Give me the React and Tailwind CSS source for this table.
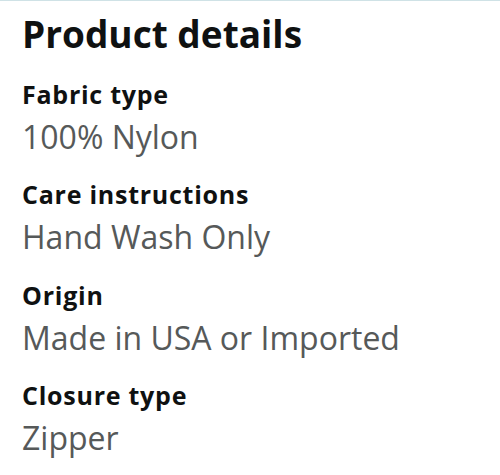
import React from 'react';

const details = [
  { label: 'Fabric type', value: '100% Nylon' },
  { label: 'Care instructions', value: 'Hand Wash Only' },
  { label: 'Origin', value: 'Made in USA or Imported' },
  { label: 'Closure type', value: 'Zipper' },
];

const App = () => {
  return (
    <div className="min-h-screen bg-white border-t border-[#cfe2e6] font-['Open_Sans',sans-serif]">
      <div className="pl-[22px] pt-[9px] flex flex-col gap-[19.5px]">
        <h2 className="mb-[1px] text-[37px] leading-[47px] font-bold text-[#0f1111]">Product details</h2>
        {details.map((d) => (
          <div key={d.label} className="flex flex-col">
            <div className="text-[25px] leading-[32px] font-bold tracking-[0.75px] text-[#0f1111]">{d.label}</div>
            <div className="mt-[5px] text-[32px] leading-[44px] text-[#565959]">{d.value}</div>
          </div>
        ))}
      </div>
    </div>
  );
};

export default App;
